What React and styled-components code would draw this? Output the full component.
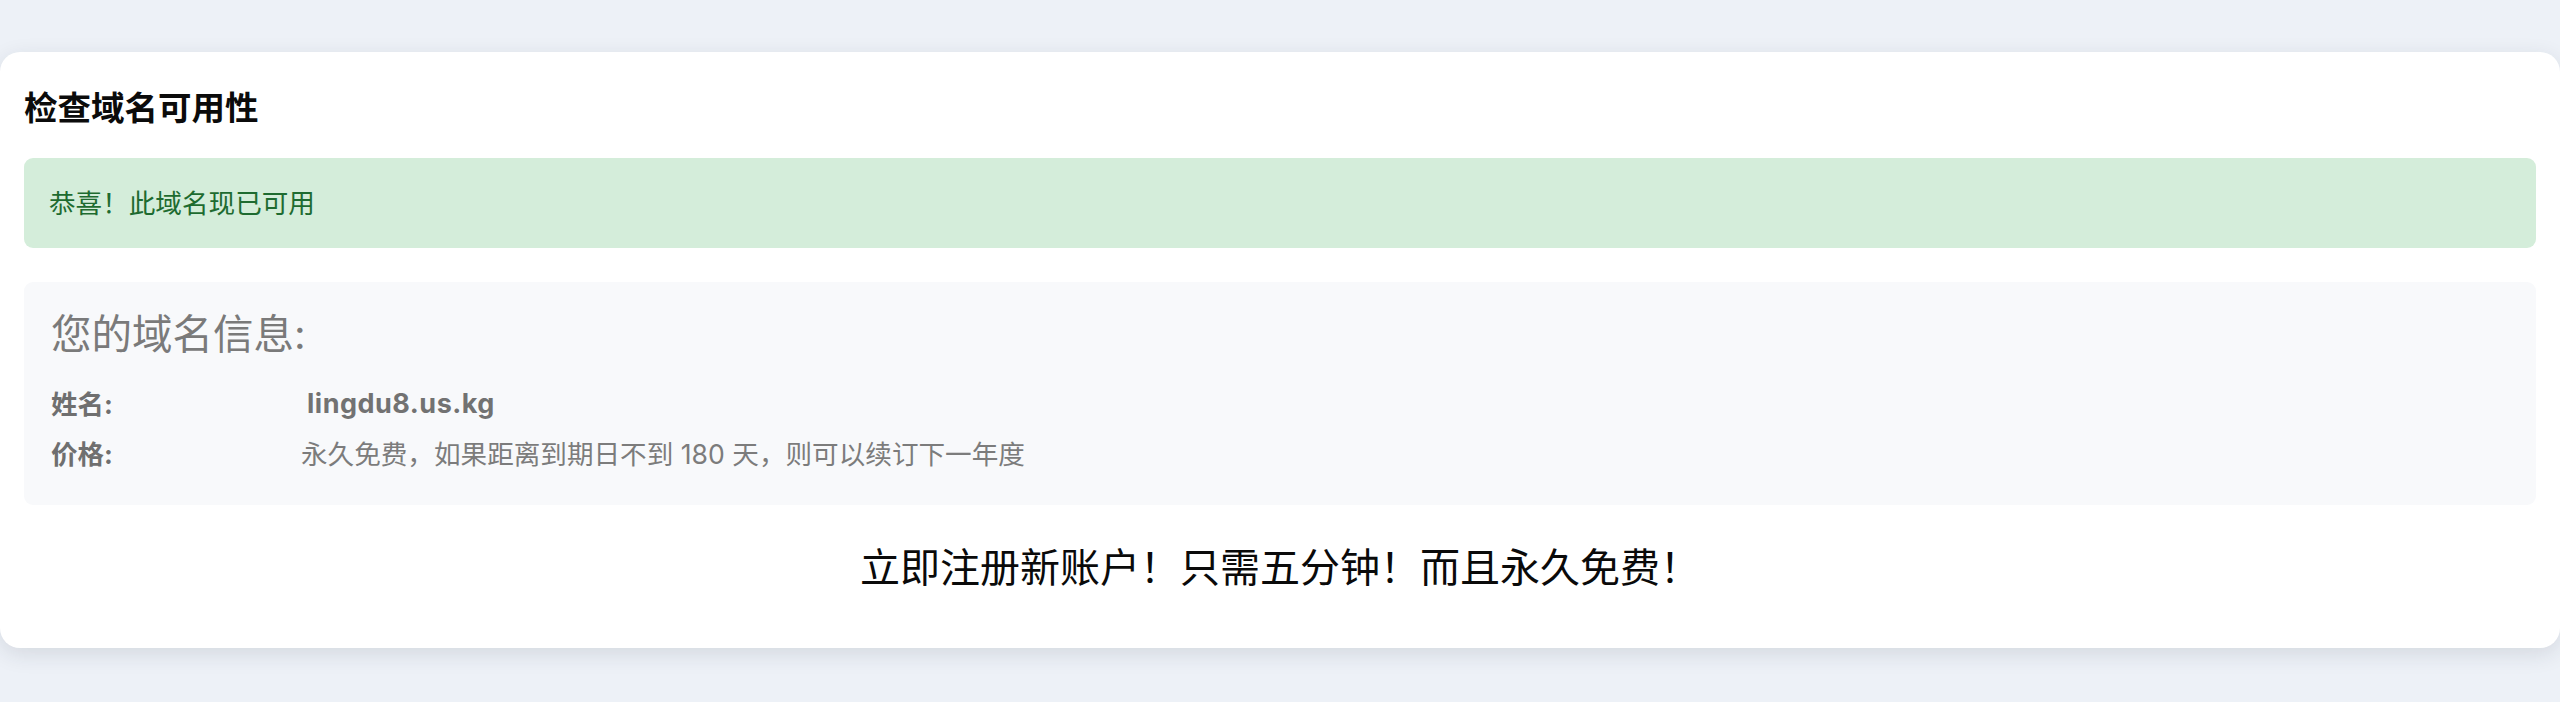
import React from 'react';
import styled, { createGlobalStyle } from 'styled-components';

const GlobalStyle = createGlobalStyle`
  html, body {
    margin: 0;
    padding: 0;
    background: #edf1f7;
  }
  body {
    font-family: "Inter", "Noto Sans CJK SC", sans-serif;
    color: #212529;
  }
`;

const Page = styled.div`
  padding-top: 52px;
  min-height: 702px;
  box-sizing: border-box;
`;

const Card = styled.section`
  background: #ffffff;
  border-radius: 20px;
  box-shadow: 0 6px 22px rgba(30, 40, 60, 0.12);
  padding: 36px 24px 55px;
`;

const Title = styled.h2`
  margin: 0;
  font-size: 33.5px;
  line-height: 40px;
  font-weight: 700;
  color: #0b0b0b;
`;

const Alert = styled.div`
  margin-top: 30px;
  background: #d4edda;
  color: #1e6b30;
  border-radius: 9px;
  padding: 30px 25px;
  font-size: 26.6px;
  line-height: 30px;
`;

const InfoBox = styled.div`
  margin-top: 34px;
  background: #f8f9fb;
  border-radius: 9px;
  padding: 29px 27px 31px;
`;

const InfoHeading = styled.h4`
  margin: 0 0 25px;
  font-size: 40.5px;
  line-height: 48px;
  font-weight: 400;
  color: #7a7a7a;
`;

const InfoRows = styled.dl`
  margin: 0;
  display: grid;
  grid-template-columns: 250px 1fr;
  row-gap: 10px;
`;

const Label = styled.dt`
  margin: 0;
  font-size: 26.5px;
  line-height: 40px;
  font-weight: 700;
  color: #6f6f6f;
`;

const Value = styled.dd`
  margin: 0;
  padding-left: ${(p) => (p.$strong ? '6px' : '0')};
  font-size: ${(p) => (p.$strong ? '27px' : '26.6px')};
  line-height: 40px;
  letter-spacing: ${(p) => (p.$strong ? '0.5px' : '0')};
  font-weight: ${(p) => (p.$strong ? 700 : 400)};
  color: ${(p) => (p.$strong ? '#727272' : '#7c7c7c')};
`;

const Promo = styled.p`
  margin: 38px 0 0;
  text-align: center;
  font-size: 40px;
  line-height: 50px;
  color: #0a0a0a;
`;

export default function App() {
  const rows = [
    { label: '姓名:', value: 'lingdu8.us.kg', strong: true },
    { label: '价格:', value: '永久免费，如果距离到期日不到 180 天，则可以续订下一年度' },
  ];

  return (
    <>
      <GlobalStyle />
      <Page>
        <Card>
          <Title>检查域名可用性</Title>
          <Alert>恭喜！此域名现已可用</Alert>
          <InfoBox>
            <InfoHeading>您的域名信息:</InfoHeading>
            <InfoRows>
              {rows.map((r) => (
                <React.Fragment key={r.label}>
                  <Label>{r.label}</Label>
                  <Value $strong={r.strong}>{r.value}</Value>
                </React.Fragment>
              ))}
            </InfoRows>
          </InfoBox>
          <Promo>立即注册新账户！只需五分钟！而且永久免费！</Promo>
        </Card>
      </Page>
    </>
  );
}
